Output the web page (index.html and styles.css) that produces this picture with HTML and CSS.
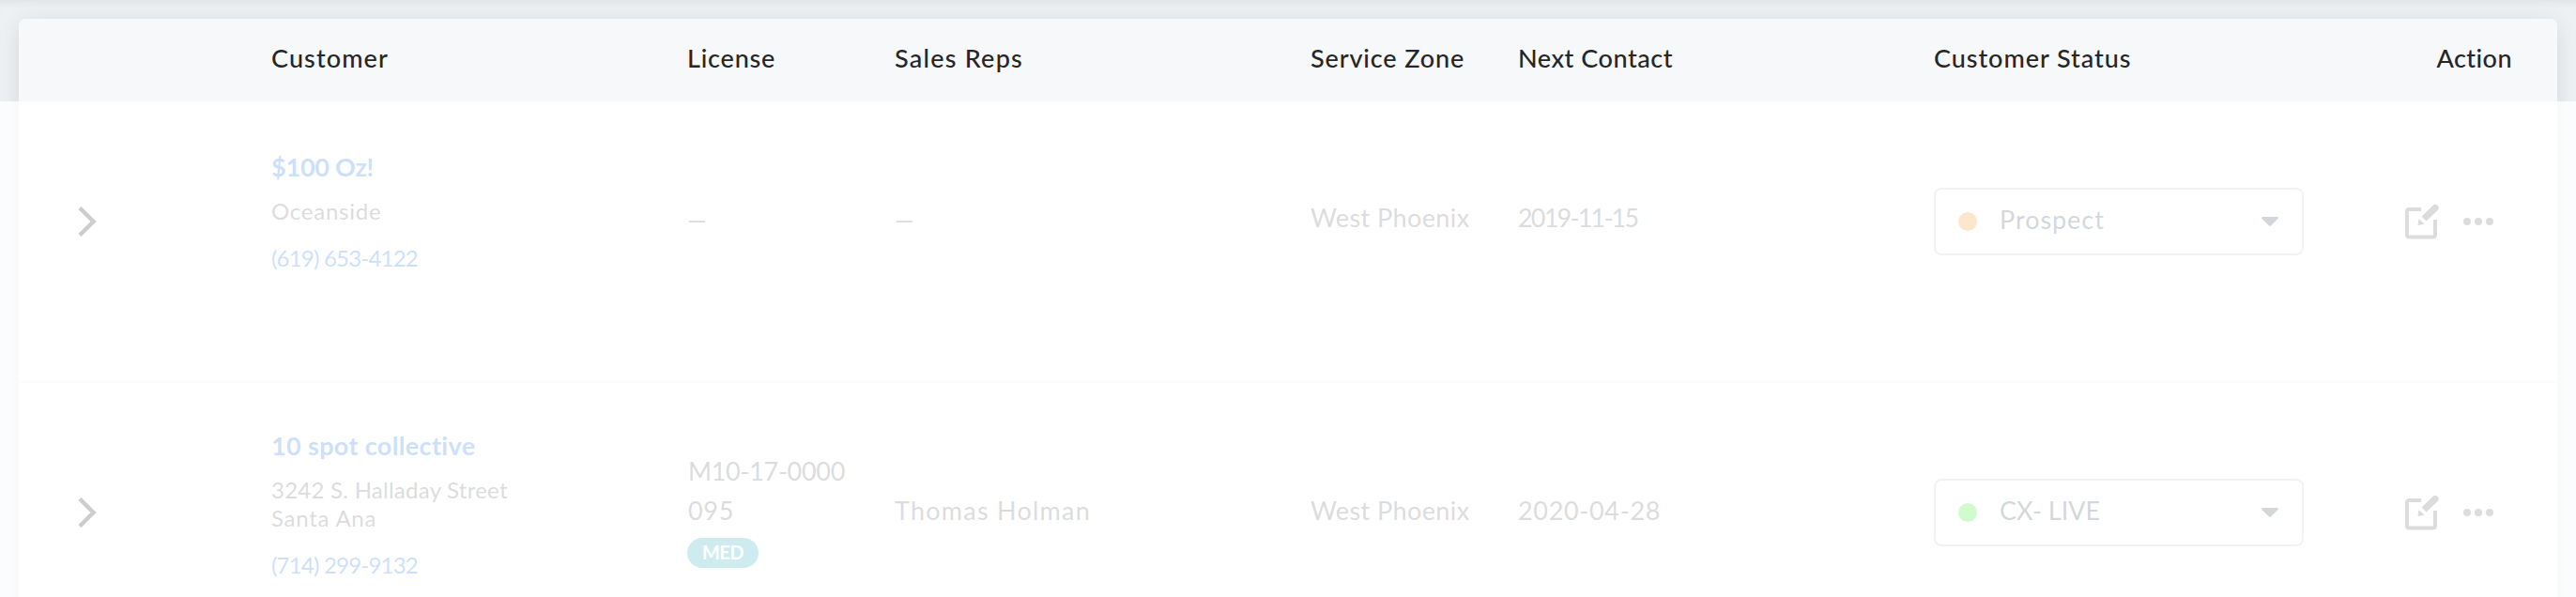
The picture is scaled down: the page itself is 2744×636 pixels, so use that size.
FILE: index.html
```
<!DOCTYPE html>
<html lang="en">
<head>
<meta charset="utf-8">
<title>Customers</title>
<link rel="stylesheet" href="styles.css">
</head>
<body>
<svg class="defs" width="0" height="0">
  <symbol id="chevron" viewBox="0 0 20 32"><path d="M2 1.500L16.500 16L2 30.500" fill="none" stroke="currentColor" stroke-width="4.400"/></symbol>
  <symbol id="caret" viewBox="0 0 18 10"><path d="M1 0H17Q18.6 .8 17.5 2L10 9.4Q9 10.2 8 9.4L.5 2Q-.6 .8 1 0Z" fill="currentColor"/></symbol>
  <symbol id="edit" viewBox="0 0 36 38"><path d="M17 6H4.500Q2 6 2 8.500V33Q2 35.500 4.500 35.500H29.500Q32 35.500 32 33V17" fill="none" stroke="currentColor" stroke-width="4"/><path d="M17.500 13.500L29.500 1.900Q32 -.4 34.600 2Q37 4.600 34.700 7L22.500 18.500ZM14.500 16L20.500 21.800L13.500 23Z" fill="currentColor"/></symbol>
  <symbol id="more" viewBox="0 0 32 8"><g fill="currentColor"><circle cx="4" cy="4" r="4"/><circle cx="16" cy="4" r="4"/><circle cx="28" cy="4" r="4"/></g></symbol>
</svg>
<main class="page">
  <section class="table">
    <header class="row head">
      <span></span>
      <span class="ls-a">Customer</span>
      <span class="ls-b">License</span>
      <span class="ls-c">Sales Reps</span>
      <span class="ls-d">Service Zone</span>
      <span class="ls-e">Next Contact</span>
      <span class="ls-f">Customer Status</span>
      <span class="end ls-g">Action</span>
    </header>
    <div class="row body first">
      <svg class="chevron"><use href="#chevron"/></svg>
      <div class="customer">
        <a class="name name-oz">$100 Oz!</a>
        <span class="address ls-h">Oceanside</span>
        <a class="phone">(619) 653-4122</a>
      </div>
      <span class="dash">—</span>
      <span class="dash">—</span>
      <span class="text zone">West Phoenix</span>
      <span class="text date-a">2019-11-15</span>
      <div class="select"><i class="dot orange"></i><span class="value ls-i">Prospect</span><svg class="caret"><use href="#caret"/></svg></div>
      <div class="actions"><svg class="edit"><use href="#edit"/></svg><svg class="more"><use href="#more"/></svg></div>
    </div>
    <div class="row body second">
      <svg class="chevron"><use href="#chevron"/></svg>
      <div class="customer">
        <a class="name">10 spot collective</a>
        <span class="address"><span class="street">3242 S. Halladay Street</span><br><span class="ls-h">Santa Ana</span></span>
        <a class="phone">(714) 299-9132</a>
      </div>
      <div class="license"><span class="number">M10-17-0000</span><span class="number rest">095</span><b class="badge">MED</b></div>
      <span class="text rep">Thomas Holman</span>
      <span class="text zone">West Phoenix</span>
      <span class="text date-b">2020-04-28</span>
      <div class="select"><i class="dot green"></i><span class="value">CX- LIVE</span><svg class="caret"><use href="#caret"/></svg></div>
      <div class="actions"><svg class="edit"><use href="#edit"/></svg><svg class="more"><use href="#more"/></svg></div>
    </div>
  </section>
  <div class="loading"></div>
</main>
</body>
</html>
```
FILE: styles.css
```
* { box-sizing: border-box; }
body { margin: 0; font-family: Lato, "Open Sans", sans-serif; font-size: 27px; line-height: 42px; overflow: hidden; }
.defs { position: absolute; }
.page { position: relative; height: 636px; padding: 20px 20px 0; overflow: hidden; background: #edf1f4; box-shadow: inset 0 8px 10px -6px rgba(0,0,0,.07); }
.table { border-radius: 8px 8px 0 0; background: #fff; box-shadow: 0 4px 24px rgba(0,0,0,.1); }
.row { display: grid; grid-template-columns: 221px 443px 221px 443px 221px 443px 443px 1fr; padding: 0 48px; align-items: center; white-space: nowrap; }
.head { height: 88px; padding-bottom: 4px; border-radius: 8px 8px 0 0; background: #f7f8fa; color: #262626; font-weight: 500; }
.end { text-align: right; }
.body { color: #505050; }
.first { height: 300px; padding-bottom: 46px; border-top: 4px solid #f0f3f4; border-bottom: 2px solid #ebeff0; }
.second { height: 276px; }
.chevron { width: 20px; height: 32px; margin-left: 15px; color: #050505; }
.customer { display: flex; flex-direction: column; padding-bottom: 16px; }
.first .customer { padding-bottom: 20px; }
.name { color: #005feb; font-weight: 700; letter-spacing: .35px; line-height: 42px; }
.name-oz { letter-spacing: -.22px; }
.address { font-size: 24px; line-height: 30px; margin: 11px 0 15px; }
.phone { color: #005feb; font-size: 24px; line-height: 40px; letter-spacing: -.8px; }
.dash { padding-bottom: 4px; font-size: 26px; }
.text { padding-bottom: 8px; }
.second .text { padding-bottom: 4px; }
.license { display: flex; flex-direction: column; align-items: flex-start; padding-bottom: 6px; }
.number { letter-spacing: -.31px; line-height: 42px; padding-left: 1px; }
.badge { display: flex; align-items: center; justify-content: center; width: 76px; height: 32px; margin-top: 8px; padding-bottom: 2px; border-radius: 16px; background: #0aa0b4; color: #fff; font-size: 20px; letter-spacing: -.54px; }
.select { display: flex; align-items: center; width: 394px; height: 72px; padding: 0 25px 0 24px; border: 2px solid #bebec3; border-radius: 8px; color: #233750; }
.dot { width: 20px; height: 20px; border-radius: 50%; margin-right: 24px; }
.orange { background: #f08000; }
.green { background: #14eb00; }
.value { flex: 1; padding-bottom: 5px; }
.caret { width: 18px; height: 10px; }
.actions { display: flex; align-items: center; justify-content: flex-end; gap: 26px; padding-right: 20px; }
.edit { width: 36px; height: 38px; }
.more { width: 32px; height: 8px; }
.loading { position: absolute; inset: 108px 0 0; background: rgba(255,255,255,.8); }
.ls-a { letter-spacing: 1.1px; }
.ls-b { letter-spacing: .8px; }
.ls-c { letter-spacing: 1.24px; }
.ls-d { letter-spacing: .87px; }
.ls-e { letter-spacing: .54px; }
.ls-f { letter-spacing: .95px; }
.ls-g { letter-spacing: .46px; }
.ls-h { letter-spacing: .75px; }
.ls-i { letter-spacing: .95px; }
.street { letter-spacing: .25px; }
.zone { letter-spacing: .4px; }
.date-a { letter-spacing: -1.8px; }
.date-b { letter-spacing: .67px; }
.rep { letter-spacing: 1.24px; }
.rest { letter-spacing: .67px; }
```
